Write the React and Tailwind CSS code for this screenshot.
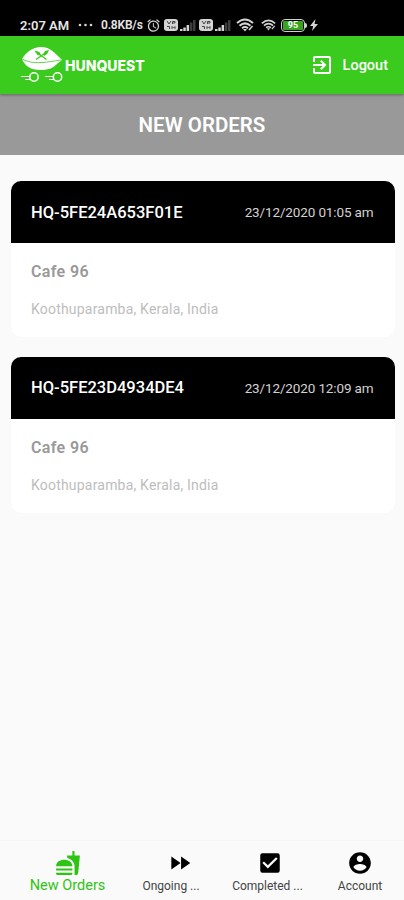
import React from 'react';
import { MdFastfood, MdFastForward, MdCheckBox, MdExitToApp, MdAlarm } from 'react-icons/md';

const orders = [
  { id: 'HQ-5FE24A653F01E', date: '23/12/2020 01:05 am', name: 'Cafe 96', address: 'Koothuparamba, Kerala, India' },
  { id: 'HQ-5FE23D4934DE4', date: '23/12/2020 12:09 am', name: 'Cafe 96', address: 'Koothuparamba, Kerala, India' },
];

function SimSignal() {
  return (
    <svg width="33" height="14" viewBox="0 0 33 14">
      <rect x="0" y="1" width="14" height="12" rx="3" fill="#d4d4d4" />
      <path d="M3 3l2 3 2-3M8.500 6V3.500h2.500V5H8.500M3 8.500h2.500v2.500M8 11V8.500l1.500 1.500L11 8.500V11" stroke="#444" strokeWidth="1" fill="none" />
      <path d="M16 13v-2h2.500v2zM19.300 13V9.500h2.500V13zM22.600 13V7h2.500v6z" fill="#d4d4d4" />
      <path d="M25.900 13V4.500h2.500V13zM29 13V2h2.500v11z" fill="#3d3d3d" />
    </svg>
  );
}

function Wifi({ small }) {
  return (
    <svg width={small ? 15 : 18} height={small ? 12 : 14} viewBox="0 0 18 14" fill="none" stroke="#d4d4d4" strokeWidth="2">
      <path d="M1 5Q9-2 17 5M3.500 7.800Q9 3 14.500 7.800M6 10.200Q9 8 12 10.200" />
      <path d="M7 11h4l-2 2.500z" fill="#d4d4d4" stroke="none" />
      <path d="M13 12l3.500-4" strokeWidth="1.500" />
    </svg>
  );
}

function Battery() {
  return (
    <div className="flex items-center">
      <div className="flex h-[13px] w-[24px] items-center justify-center rounded-[4px] border-[1.5px] border-[#d0d0d0] bg-black p-px">
        <div className="flex h-full w-full items-center justify-center rounded-[1px] bg-[#38a41c] text-[9px] leading-none font-bold text-white">95</div>
      </div>
      <div className="h-[5px] w-[2px] rounded-r bg-[#d0d0d0]" />
    </div>
  );
}

function StatusBar() {
  return (
    <div className="flex h-[36px] items-end bg-black pb-[3px] pl-[20px] text-[#e6e6e6]">
      <div className="flex h-[16px] items-center">
        <span className="w-[50px] text-[13px] leading-none font-semibold whitespace-nowrap">2:07 AM</span>
        <svg className="ml-[8px]" width="15" height="4" viewBox="0 0 15 4" fill="#d4d4d4">
          <circle cx="2" cy="2" r="1.300" />
          <circle cx="7.500" cy="2" r="1.300" />
          <circle cx="13" cy="2" r="1.300" />
        </svg>
        <span className="ml-[8px] w-[43px] text-[12px] leading-none font-semibold tracking-[-0.2px] whitespace-nowrap">0.8KB/s</span>
        <MdAlarm className="ml-[2px] h-[15px] w-[15px] text-[#d4d4d4]" />
        <div className="ml-[3px] flex gap-[2px]">
          <SimSignal />
          <SimSignal />
        </div>
        <div className="ml-[4px] flex items-center gap-[7px]">
          <Wifi />
          <Wifi small />
        </div>
        <div className="ml-[5px]"><Battery /></div>
        <svg className="ml-[3px]" width="8" height="12" viewBox="0 0 8 12" fill="#d4d4d4">
          <path d="M5.500 0L0 7h3.200L2 12l6-7H4.600z" />
        </svg>
      </div>
    </div>
  );
}

function Logo() {
  return (
    <svg width="44" height="38" viewBox="0 0 44 38" fill="none">
      <path d="M1 13C5 6 12 1 20 1c8 0 13 5 17 9l4 4-4 3c-5 5-9 7-17 7C11 24 4 21 1 13z" fill="#fff" />
      <path d="M1 13c6 3 11 4 20 3.500S35 14.500 40 14" stroke="#3bca1e" strokeWidth="0.8" />
      <path d="M14.500 5.500l11 8M26.500 5.500L15 13.500" stroke="#3bca1e" strokeWidth="1.300" />
      <path d="M13.500 4.500l5 1.500 1.500 3.500-3.500-.5zM22 8.500l2-3.500 4-1-1.500 3.500-3 2.500z" fill="#3bca1e" />
      <g stroke="#fff" strokeWidth="1.500">
        <circle cx="13" cy="31" r="4.200" />
        <circle cx="36.500" cy="31" r="4.200" />
        <path d="M0 30.500h9M4 33.500h5M24 30.500h9M28 33.500h5" strokeWidth="1.200" />
      </g>
    </svg>
  );
}

function AccountIcon() {
  return (
    <svg className="h-[26px] w-[26px]" viewBox="0 0 24 24" fill="currentColor">
      <path d="M12 2C6.480 2 2 6.480 2 12s4.480 10 10 10 10-4.480 10-10S17.520 2 12 2zm0 3c1.660 0 3 1.340 3 3s-1.340 3-3 3-3-1.340-3-3 1.340-3 3-3zm0 14.200c-2.500 0-4.710-1.280-6-3.220.030-1.990 4-3.080 6-3.080 1.990 0 5.970 1.090 6 3.080-1.290 1.940-3.500 3.220-6 3.220z" />
    </svg>
  );
}

function OrderCard({ order }) {
  return (
    <div className="h-[156px] overflow-hidden rounded-[10px] bg-white shadow-[0_0_3px_rgba(0,0,0,0.02)]">
      <div className="flex h-[62px] items-center justify-between bg-black pr-[21px] pl-[20px]">
        <span className="pt-[2px] text-[16.5px] font-medium whitespace-nowrap text-white">{order.id}</span>
        <span className="pt-px text-[13.5px] tracking-[-0.13px] whitespace-nowrap text-[#d2d2d2]">{order.date}</span>
      </div>
      <div className="px-[20px] pt-[17px]">
        <div className="text-[16px] leading-[24px] font-semibold tracking-[0.35px] text-[#999]">{order.name}</div>
        <div className="mt-[15px] text-[14px] leading-[20px] tracking-[0.2px] text-[#bdbdbd]">{order.address}</div>
      </div>
    </div>
  );
}

export default function App() {
  return (
    <div className="flex h-[900px] w-[404px] flex-col overflow-hidden bg-[#fafafa] font-['Roboto',sans-serif]">
      <StatusBar />
      <header className="z-10 flex h-[58px] items-center bg-[#3bca1e] pr-[16px] pl-[21px] text-white shadow-[0_1px_3px_rgba(0,0,0,0.35)]">
        <Logo />
        <span className="font-['Inter',sans-serif] text-[14px] font-extrabold">HUNQUEST</span>
        <button className="ml-auto flex items-center gap-[9px]">
          <MdExitToApp className="h-[24px] w-[24px]" />
          <span className="pt-[2px] text-[14.5px] font-medium">Logout</span>
        </button>
      </header>
      <div className="flex h-[61px] items-center justify-center bg-[#999]">
        <h1 className="pt-[2px] text-[20.5px] font-semibold text-white">NEW ORDERS</h1>
      </div>

      <main className="flex flex-1 flex-col gap-[19.500px] pt-[26px] pr-[9.500px] pl-[11px]">
        {orders.map(o => <OrderCard key={o.id} order={o} />)}
      </main>

      <nav className="flex h-[60px] border-t border-[#f6f6f6] bg-[#fafafa] pt-[9px] pl-[30px] text-[12px] text-[#444]">
        <div className="flex w-[75px] flex-col items-center text-[#2fc414]">
          <MdFastfood className="h-[26px] w-[26px]" />
          <span className="text-[14.5px] leading-[19px] whitespace-nowrap">New Orders</span>
        </div>
        <div className="ml-[37px] flex w-[58px] flex-col items-center">
          <MdFastForward className="ml-[18px] h-[26px] w-[26px] text-black" />
          <span className="leading-[20px] whitespace-nowrap">Ongoing ...</span>
        </div>
        <div className="ml-[32px] flex w-[71px] flex-col items-center">
          <MdCheckBox className="ml-[5px] h-[26px] w-[26px] text-black" />
          <span className="leading-[20px] whitespace-nowrap">Completed ...</span>
        </div>
        <div className="ml-[34px] flex w-[46px] flex-col items-center">
          <div className="text-black"><AccountIcon /></div>
          <span className="leading-[20px] whitespace-nowrap">Account</span>
        </div>
      </nav>
    </div>
  );
}
